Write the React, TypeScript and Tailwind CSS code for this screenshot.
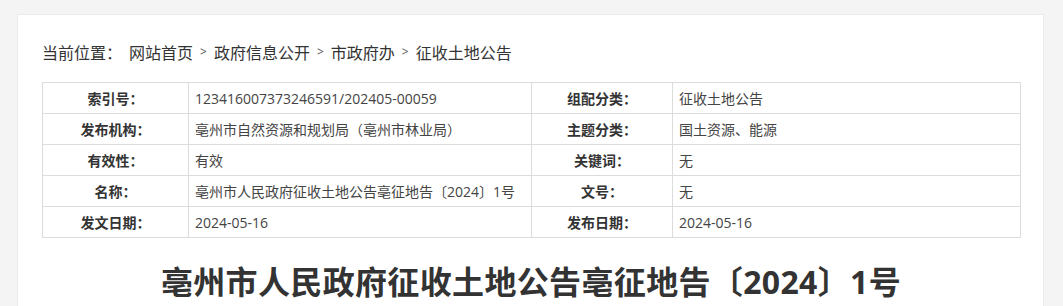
import React from "react";

const rows: [string, string, string, string][] = [
  ["索引号：", "123416007373246591/202405-00059", "组配分类：", "征收土地公告"],
  ["发布机构：", "亳州市自然资源和规划局（亳州市林业局）", "主题分类：", "国土资源、能源"],
  ["有效性：", "有效", "关键词：", "无"],
  ["名称：", "亳州市人民政府征收土地公告亳征地告〔2024〕1号", "文号：", "无"],
  ["发文日期：", "2024-05-16", "发布日期：", "2024-05-16"],
];

const font = { fontFamily: '"Open Sans", "Noto Sans CJK SC", "Noto Sans", sans-serif' };
const cjk = { fontFamily: '"Noto Sans CJK SC", "Noto Sans", sans-serif' };

export default function App() {
  const crumbs = ["网站首页", "政府信息公开", "市政府办", "征收土地公告"];
  return (
    <div className="w-[1063px] h-[306px] overflow-hidden bg-[#f4f4f4] pt-[14px] pl-[17px]" style={font}>
      <div className="w-[1027px] h-[300px] bg-white border-t border-l border-r border-[#ececec] pl-[24px] pt-[22px]">
        <div className="flex items-center h-[30px] text-[16px] text-[#333] leading-none" style={cjk}>
          <span>当前位置：</span>
          <span className="ml-[7px]">{crumbs[0]}</span>
          {crumbs.slice(1).map((c) => (
            <React.Fragment key={c}>
              <span className="mx-[7px] text-[12px] text-[#555]" style={font}>&gt;</span>
              <span>{c}</span>
            </React.Fragment>
          ))}
        </div>
        <table className="mt-[15px] w-[978px] border-collapse table-fixed text-[14px] text-[#333]">
          <colgroup>
            <col className="w-[146px]" />
            <col className="w-[343px]" />
            <col className="w-[141px]" />
            <col className="w-[348px]" />
          </colgroup>
          <tbody>
            {rows.map((r) => (
              <tr key={r[0]} className="h-[31px]">
                <td className="border border-[#dcdcdc] text-center font-bold p-0" style={cjk}>{r[0]}</td>
                <td className="border border-[#dcdcdc] pl-[6px] p-0 text-[#444]">{r[1]}</td>
                <td className="border border-[#dcdcdc] text-center font-bold p-0" style={cjk}>{r[2]}</td>
                <td className="border border-[#dcdcdc] pl-[6px] p-0 text-[#444]">{r[3]}</td>
              </tr>
            ))}
          </tbody>
        </table>
        <h1 className="w-[978px] mt-[24px] text-center text-[32px] font-bold text-[#333] leading-[40px] tracking-[0.35px]">
          亳州市人民政府征收土地公告亳征地告〔2024〕1号
        </h1>
      </div>
    </div>
  );
}
